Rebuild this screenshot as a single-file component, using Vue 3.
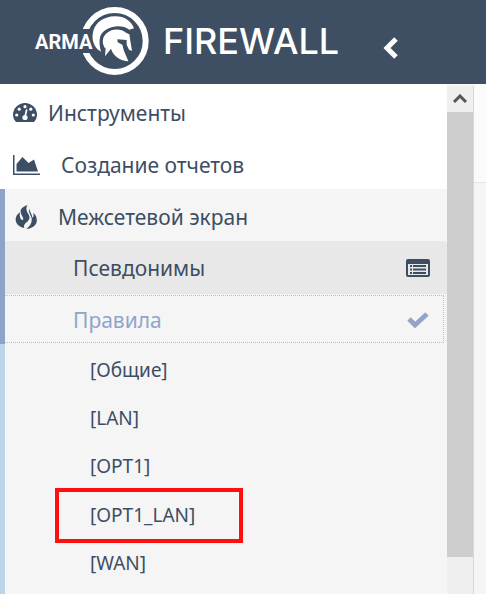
<script setup>
const sections = [
  { id: 'tools', label: 'Инструменты' },
  { id: 'reports', label: 'Создание отчетов' },
]
const rules = ['[Общие]', '[LAN]', '[OPT1]', '[OPT1_LAN]', '[WAN]']
const marked = '[OPT1_LAN]'
</script>

<template>
  <div class="page">
    <header class="header">
      <a class="brand" href="#" aria-label="ARMA FIREWALL">
        <svg width="330" height="84" viewBox="0 0 330 84">
          <clipPath id="ring-gap"><path d="M55 0H135V84H55V53H76V29H55Z" /></clipPath>
          <circle class="ring" cx="94.700" cy="41" r="31" clip-path="url(#ring-gap)" />
          <g transform="scale(.33333)" fill="#fff">
            <path d="M243 155C221 144 213 116 220 92C228 66 252 50 284 49C312 48 333 62 342 85L328 89C314 78 292 76 275 82C256 88 244 98 240 112C237 126 239 142 243 155Z" />
            <path d="M255 169C256 160 256 152 257 146C246 134 245 114 258 101C274 85 302 84 318 98L328 103L331 122L336 153L327 149L320 134L320 120L292 118L293 127L307 134L311 150L325 184C302 182 280 170 273 146Z" />
          </g>
          <text class="arma" x="15" y="49">ARMA</text>
          <text class="product" x="143" y="54">FIREWALL</text>
        </svg>
      </a>
      <button class="toggle" type="button" aria-label="Свернуть меню">
        <svg width="16" height="22" viewBox="0 0 16 22"><path d="M13 2L4 11l9 9" /></svg>
      </button>
    </header>

    <div class="body">
      <nav class="menu">
        <a v-for="s in sections" :key="s.id" href="#" class="row section" :class="s.id">
          <svg v-if="s.id === 'tools'" width="24" height="20" viewBox="0 0 24 20">
            <path fill="#3c4e64" d="M3 19Q0 16 0 12a12 12 0 0 1 24 0q0 4-3 7Z" />
            <g fill="#fff"><circle cx="3.700" cy="12" r="1.600" /><circle cx="6.200" cy="6.200" r="1.600" /><circle cx="12" cy="3.700" r="1.600" /><circle cx="17.800" cy="6.200" r="1.600" /><circle cx="20.300" cy="12" r="1.600" /><circle cx="12" cy="14.500" r="2.600" /></g>
            <path d="M12 14l1.600-7" stroke="#fff" stroke-width="1.700" stroke-linecap="round" />
          </svg>
          <svg v-else width="27" height="20" viewBox="0 0 27 20" fill="#3c4e64">
            <path d="M0 0h1.500v18.500H27V20H0ZM3.500 16.500V9L9.500 2l6 6L21 4.500l4 12Z" />
          </svg>
          <span>{{ s.label }}</span>
        </a>

        <div class="group">
          <a href="#" class="row section firewall">
            <svg width="22" height="24" viewBox="0 0 64 72" fill="#3c4e64">
              <path d="M36 0C14 8 12 20 20 32C25 40 25 45 21 45C15 44 12 36 14 22C-6 34 -4 64 27 69C24 60 28 56 36 50C46 41 43 33 37 24C32 16 32 8 36 0Z" />
              <path d="M42 11C44 22 51 28 51 38C56 36 55 30 54 23C67 34 66 50 61 58C55 67 46 71 33 72C43 64 51 54 49 40C47 30 38 24 42 11Z" />
            </svg>
            <span>Межсетевой экран</span>
          </a>
          <a href="#" class="row child aliases">
            <span>Псевдонимы</span>
            <svg width="24" height="18" viewBox="0 0 24 18">
              <rect width="24" height="18" rx="2" fill="#3c4e64" />
              <path fill="#e8e8e8" d="M2 5h20v11H2Z" />
              <path stroke="#3c4e64" stroke-width="2" d="M4 7h2m1 0H20M4 10.500h2m1 0H20M4 14h2m1 0H20" />
            </svg>
          </a>
          <a href="#" class="row child rules">
            <span>Правила</span>
            <svg width="22" height="16" viewBox="0 0 22 16"><path d="M2 7l6 6L20 2" fill="none" stroke="#8fa5cb" stroke-width="4.800" /></svg>
          </a>
        </div>

        <div class="leaves">
          <a v-for="r in rules" :key="r" href="#" class="leaf" :class="{ marked: r === marked }">{{ r }}</a>
        </div>
      </nav>

      <div class="scrollbar">
        <button class="up" type="button" aria-label="Вверх">
          <svg width="14" height="10" viewBox="0 0 14 10"><path d="M1 8L7 2l6 6" fill="none" stroke="#555" stroke-width="3" /></svg>
        </button>
        <div class="thumb"></div>
      </div>
      <main class="content"><div class="title-bar"></div></main>
    </div>
  </div>
</template>

<style>
body { margin: 0; background: #f5f5f5; }
</style>

<style scoped>
.page { height: 100vh; display: flex; flex-direction: column; overflow: hidden; font-family: "Noto Sans", sans-serif; color: #3c4e64; }
a { color: inherit; text-decoration: none; }
button { border: 0; padding: 0; background: none; }
svg { display: block; flex: none; }
.header { flex: none; height: 84px; display: flex; align-items: center; background: #3e4f64; padding-left: 20px; }
.ring { fill: none; stroke: #fff; stroke-width: 6; }
.arma { fill: #fff; font: 700 20px Roboto, sans-serif; }
.product { fill: #fff; font: 500 36px Inter, sans-serif; }
.toggle { margin: 12px 0 0 33px; }
.toggle path { fill: none; stroke: #fff; stroke-width: 5; }
.body { flex: 1; min-height: 0; display: flex; }
.menu { flex: 1; min-width: 0; overflow: hidden; background: #fff; font-size: 21px; padding-top: 1px; }
.row { display: flex; align-items: center; height: 52px; box-sizing: border-box; padding-top: 4px; }
.section { padding-left: 13px; }
.tools { gap: 11px; }
.reports { gap: 21px; }
.group { background: #f5f5f5; border-left: 5px solid #8fa3c8; padding-bottom: 1px; }
.firewall { padding-left: 10px; padding-top: 3px; gap: 21px; }
.child { justify-content: space-between; padding-left: 68px; }
.aliases { height: 53px; padding-top: 0; background: #e8e8e8; border-radius: 0 4px 0 0; padding-right: 17px; }
.rules { height: 48px; margin: 1px 3px 0 0; padding-top: 1px; padding-right: 14px; color: #8fa5cb; border: 1px dotted #b4c0d8; border-left: 0; }
.leaves { background: #f5f5f5; border-left: 5px solid #bdd3e8; padding: 2px 0 48px 50px; font-size: 19px; }
.leaf { display: flex; align-items: center; box-sizing: border-box; height: 48px; width: 188px; padding-left: 35px; }
.marked { height: 55px; margin: -2px 0 -4px; padding: 0 0 2px 31px; border: 4px solid #ff1010; }
.scrollbar { flex: none; width: 26px; margin-top: 2px; background: #efefef; border-right: 1px solid #d8d8d8; display: flex; flex-direction: column; }
.up { height: 26px; display: flex; align-items: center; justify-content: center; }
.thumb { flex: 0 1 445px; background: #cdcdcd; }
.content { width: 12px; flex: none; background: #f5f5f5; }
.title-bar { height: 98px; background: #fbfbfb; border-bottom: 1px solid #e5e5e5; }
</style>
